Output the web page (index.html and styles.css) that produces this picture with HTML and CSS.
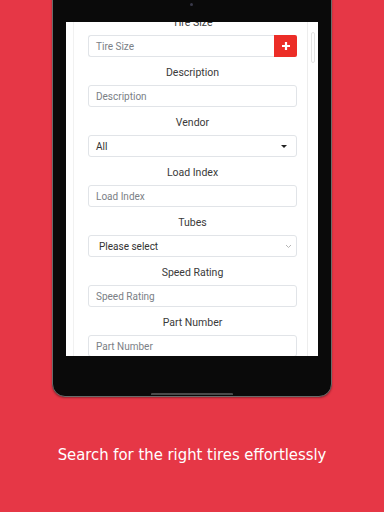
FILE: index.html
```html
<!DOCTYPE html>
<html>
<head>
<meta charset="utf-8">
<link rel="stylesheet" href="styles.css">
</head>
<body>
<div class="device">
  <div class="camera"></div>
  <div class="screen">
    <div class="panel">
      <div class="group">
        <div class="label">Tire Size</div>
        <div class="input-row">
          <div class="input grow"><span class="ph">Tire Size</span></div>
          <div class="plus">
            <svg width="10" height="10" viewBox="0 0 10 10"><path d="M5 1v8M1 5h8" stroke="#fff" stroke-width="2.2"/></svg>
          </div>
        </div>
      </div>
      <div class="group">
        <div class="label">Description</div>
        <div class="input"><span class="ph">Description</span></div>
      </div>
      <div class="group">
        <div class="label">Vendor</div>
        <div class="input select"><span class="val">All</span><span class="caret"></span></div>
      </div>
      <div class="group">
        <div class="label">Load Index</div>
        <div class="input"><span class="ph">Load Index</span></div>
      </div>
      <div class="group">
        <div class="label">Tubes</div>
        <div class="input select native"><span class="val">Please select</span>
          <svg class="chev" width="7" height="5" viewBox="0 0 7 5"><path d="M1 1l2.5 2.5L6 1" fill="none" stroke="#b5b5b5" stroke-width="1"/></svg>
        </div>
      </div>
      <div class="group">
        <div class="label">Speed Rating</div>
        <div class="input"><span class="ph">Speed Rating</span></div>
      </div>
      <div class="group">
        <div class="label">Part Number</div>
        <div class="input"><span class="ph">Part Number</span></div>
      </div>
    </div>
    <div class="scrollbar"></div>
  </div>
  <div class="home"></div>
</div>
<p class="caption">Search for the right tires effortlessly</p>
</body>
</html>
```

FILE: styles.css
```css
html, body {
  margin: 0;
  padding: 0;
}
body {
  background: #e63746;
  width: 384px;
  height: 512px;
  overflow: hidden;
  font-family: Roboto, "Liberation Sans", sans-serif;
}
.device {
  position: relative;
  box-sizing: border-box;
  width: 280px;
  height: 418px;
  margin: -21px 0 0 52px;
  padding: 42px 13px 0 13px;
  background: #0a0a0a;
  border: 1px solid #6a6a6a;
  border-radius: 13px;
  box-shadow: 0 1px 2px rgba(0,0,0,0.35);
}
.camera {
  position: absolute;
  left: 137px;
  top: 23px;
  width: 3px;
  height: 3px;
  border-radius: 50%;
  background: #3a3a4a;
}
.home {
  position: absolute;
  left: 98px;
  bottom: 1px;
  width: 82px;
  height: 2px;
  border-radius: 1px 1px 0 0;
  background: #4a4a4a;
}
.screen {
  position: relative;
  height: 334px;
  background: #fff;
  overflow: hidden;
}
.panel {
  box-sizing: border-box;
  margin: -6px 0 0 7px;
  width: 235px;
  padding: 0 10px 0 14px;
  border-left: 1px solid #f1f1f1;
  border-right: 1px solid #ededed;
  height: 400px;
}
.group {
  margin-bottom: 9px;
}
.label {
  text-align: center;
  font-size: 10.5px;
  line-height: 13px;
  color: #3a3a3a;
  margin-bottom: 6px;
}
.input-row {
  display: flex;
}
.input {
  box-sizing: border-box;
  height: 22px;
  border: 1px solid #e1e4e8;
  border-radius: 3px;
  display: flex;
  align-items: center;
  padding: 0 7px;
  font-size: 10px;
}
.grow {
  flex: 1;
  border-right: none;
  border-radius: 3px 0 0 3px;
}
.ph {
  color: #7b8086;
}
.val {
  color: #333;
}
.plus {
  width: 23px;
  height: 22px;
  background: #ec2d27;
  border-radius: 0 2px 2px 0;
  display: flex;
  align-items: center;
  justify-content: center;
}
.select {
  justify-content: space-between;
}
.native {
  padding-left: 10px;
  padding-right: 4px;
}
.caret {
  width: 0;
  height: 0;
  border-left: 3px solid transparent;
  border-right: 3px solid transparent;
  border-top: 3px solid #222;
  margin-right: 2px;
}
.scrollbar {
  position: absolute;
  right: 3px;
  top: 10px;
  width: 2px;
  height: 29px;
  border: 1px solid #e4e4e4;
  border-radius: 2px;
}
.caption {
  margin: 48px 0 0 0;
  text-align: center;
  color: #fff;
  font-family: "DejaVu Sans Condensed", "DejaVu Sans", sans-serif;
  font-stretch: condensed;
  font-size: 16.5px;
  line-height: 20px;
}
```
